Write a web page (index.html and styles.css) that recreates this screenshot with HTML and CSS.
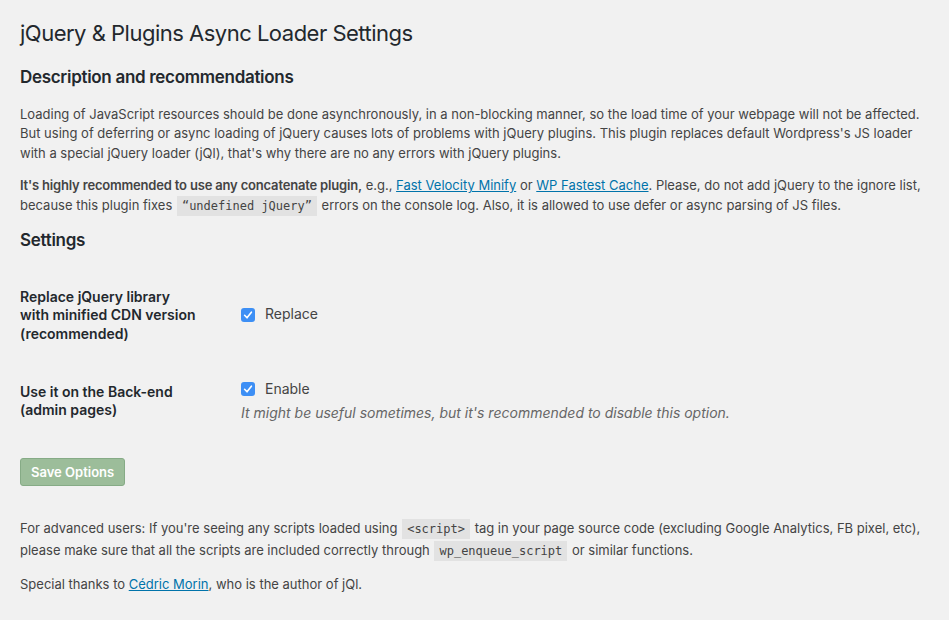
FILE: index.html
```html
<!DOCTYPE html>
<html lang="en">
<head>
<meta charset="utf-8">
<title>jQuery &amp; Plugins Async Loader Settings</title>
<link rel="stylesheet" href="styles.css">
</head>
<body>
<div class="wrap">
  <h1>jQuery &amp; Plugins Async Loader Settings</h1>
  <h2 class="first">Description and recommendations</h2>
  <p>Loading of JavaScript resources should be done asynchronously, in a non-blocking manner, so the load time of your webpage will not be affected. But using of deferring or async loading of jQuery causes lots of problems with jQuery plugins. This plugin replaces default Wordpress's JS loader with a special jQuery loader (jQl), that's why there are no any errors with jQuery plugins.</p>
  <p><strong>It's highly recommended to use any concatenate plugin,</strong> e.g., <a href="#">Fast Velocity Minify</a> or <a href="#">WP Fastest Cache</a>. Please, do not add jQuery to the ignore list, because this plugin fixes <code>“undefined jQuery”</code> errors on the console log. Also, it is allowed to use defer or async parsing of JS files.</p>
  <h2>Settings</h2>
  <form class="options">
    <table class="form-table">
      <tr>
        <th>Replace jQuery library with minified CDN version (recommended)</th>
        <td>
          <label class="check"><span class="box"><svg viewBox="0 0 14 14" width="14" height="14"><path d="M3.6 7.3 L6 9.8 L10.4 4.2" fill="none" stroke="#fff" stroke-width="1.6" stroke-linecap="round" stroke-linejoin="round"/></svg></span>Replace</label>
        </td>
      </tr>
      <tr>
        <th>Use it on the Back-end (admin pages)</th>
        <td class="top">
          <label class="check"><span class="box"><svg viewBox="0 0 14 14" width="14" height="14"><path d="M3.6 7.3 L6 9.8 L10.4 4.2" fill="none" stroke="#fff" stroke-width="1.6" stroke-linecap="round" stroke-linejoin="round"/></svg></span>Enable</label>
          <p class="description">It might be useful sometimes, but it's recommended to disable this option.</p>
        </td>
      </tr>
    </table>
    <p class="submit"><button type="button" class="button-primary" disabled>Save Options</button></p>
  </form>
  <p class="advanced">For advanced users: If you're seeing any scripts loaded using <code>&lt;script&gt;</code> tag in your page source code (excluding Google Analytics, FB pixel, etc), please make sure that all the scripts are included correctly through <code>wp_enqueue_script</code> or similar functions.</p>
  <p>Special thanks to <a href="#">Cédric Morin</a>, who is the author of jQl.</p>
</div>
</body>
</html>
```
FILE: styles.css
```css
html, body {
  margin: 0;
  padding: 0;
  background: #f1f1f1;
}
body {
  font-family: Inter, "Noto Sans", sans-serif;
  font-size: 13px;
  line-height: 1.4em;
  color: #444;
}
.wrap {
  margin: 10px 20px 0 20px;
}
h1 {
  font-size: 22px;
  letter-spacing: -0.5px;
  font-weight: 400;
  margin: 0;
  padding: 9px 0 4px;
  line-height: 1.3;
  color: #23282d;
}
h2 {
  font-size: 17px;
  letter-spacing: -0.3px;
  font-weight: 600;
  margin: 14px 0 17px;
  color: #23282d;
  line-height: 1.3;
}
p {
  font-size: 13px;
  line-height: 1.5;
  margin: 1em 0;
}
strong { font-weight: 600; letter-spacing: -0.18px; }
a { color: #0073aa; text-decoration: underline; }
code {
  font-family: "DejaVu Sans Mono", monospace;
  font-size: 12px;
  background: #e2e2e2;
  padding: 3px 5px 3px;
  margin: 0 1px;
}
.form-table {
  border-collapse: collapse;
  table-layout: fixed;
  margin-top: 5px;
  width: 100%;
  font-size: 14px;
}
.form-table th {
  width: 180px;
  text-align: left;
  vertical-align: top;
  padding: 20px 30px 20px 0;
  line-height: 1.3;
  font-weight: 600;
  color: #23282d;
}
.form-table td {
  vertical-align: middle;
  padding: 15px 10px 15px 11px;
  line-height: 1.3;
}
.form-table td.top {
  vertical-align: top;
  padding-top: 17px;
}
.check {
  display: inline-flex;
  align-items: center;
  gap: 10px;
}
.box {
  display: inline-flex;
  width: 14px;
  height: 14px;
  border-radius: 3px;
  background: #3d8ff5;
}
.description {
  font-style: italic;
  font-size: 14px;
  margin: 2px 0 0;
  color: #666;
}
.submit { padding: 0; margin: 19px 0 0; }
.button-primary {
  font-family: inherit;
  font-size: 13px;
  font-weight: 600;
  color: #fff;
  background: #9cbd9a;
  border: 1px solid #86ab86;
  border-radius: 3px;
  height: 28px;
  padding: 0 10px;
}
.advanced { margin-top: 32px; line-height: 21px; }
```
